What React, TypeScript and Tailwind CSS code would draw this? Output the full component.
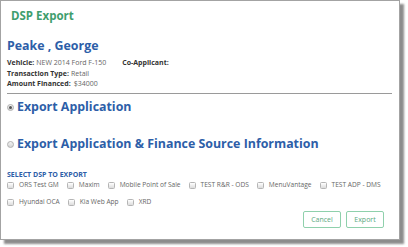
import React from "react";

function Check({ label }: { label: string }) {
  return (
    <div className="flex items-center mr-[8px] shrink-0 whitespace-nowrap">
      <span className="w-[7px] h-[7px] rounded-[1.5px] border border-[#b5b5b5] bg-gradient-to-b from-[#ffffff] to-[#dcdcdc] mr-[5px] shrink-0" />
      <span className="text-[6.6px] leading-none text-[#666]">{label}</span>
    </div>
  );
}

function Radio({ checked, label, className }: { checked?: boolean; label: string; className?: string }) {
  return (
    <div className={"flex items-center " + (className ?? "")}>
      <span className="w-[7px] h-[7px] rounded-full border border-[#b0b0b0] bg-gradient-to-b from-[#f4f4f4] to-[#d4d4d4] flex items-center justify-center mr-[3px] shrink-0">
        {checked && <span className="w-[3px] h-[3px] rounded-full bg-[#555]" />}
      </span>
      <span className="text-[12.4px] leading-none font-bold text-[#2d5ea8] whitespace-nowrap">{label}</span>
    </div>
  );
}

export default function App() {
  return (
    <div className="w-[408px] h-[247px] bg-white" style={{ fontFamily: '"Open Sans", sans-serif' }}>
      <div className="w-[400px] h-[240px] border border-[#a3a3a3] bg-white shadow-[4px_4px_2px_rgba(0,0,0,0.45)] pl-[6px] pr-[7px] flex flex-col">
        <div className="mt-[9px] ml-[4px] text-[11.5px] leading-none font-bold text-[#3f9e6e]">DSP Export</div>
        <div className="mt-[18px] text-[12.4px] leading-none font-bold text-[#2d5ea8]">Peake , George</div>
        <div className="mt-[5px] flex text-[7px] leading-[11px] whitespace-nowrap">
          <span className="font-bold text-[#333]">Vehicle:</span>
          <span className="ml-[2px] text-[#666]">NEW 2014 Ford F-150</span>
          <span className="ml-[16px] font-bold text-[#333]">Co-Applicant:</span>
        </div>
        <div className="flex text-[7px] leading-[11px] whitespace-nowrap">
          <span className="font-bold text-[#333]">Transaction Type:</span>
          <span className="ml-[2px] text-[#666]">Retail</span>
        </div>
        <div className="flex text-[7px] leading-[10px] whitespace-nowrap">
          <span className="font-bold text-[#333]">Amount Financed:</span>
          <span className="ml-[3px] text-[#666]">$34000</span>
        </div>
        <div className="mt-[4px] border-t border-[#9a9a9a]" />
        <Radio checked label="Export Application" className="mt-[7px]" />
        <Radio label="Export Application & Finance Source Information" className="mt-[25px]" />
        <div className="mt-[20px] text-[7px] leading-none font-bold text-[#2d5ea8]">SELECT DSP TO EXPORT</div>
        <div className="flex h-[16px] items-center">
          <Check label="ORS Test GM" />
          <Check label="Maxim" />
          <Check label="Mobile Point of Sale" />
          <Check label="TEST R&R - ODS" />
          <Check label="MenuVantage" />
          <Check label="TEST ADP - DMS" />
        </div>
        <div className="flex h-[16px] items-center mt-[1px]">
          <Check label="Hyundai OCA" />
          <Check label="Kia Web App" />
          <Check label="XRD" />
        </div>
        <div className="flex justify-end mr-[8px]">
          <button className="w-[38px] h-[17px] border border-[#8fd0ac] rounded-[2px] text-[7px] text-[#5aa880] leading-none">Cancel</button>
          <button className="ml-[5px] w-[38px] h-[17px] border border-[#8fd0ac] rounded-[2px] text-[7px] text-[#5aa880] leading-none">Export</button>
        </div>
      </div>
    </div>
  );
}
